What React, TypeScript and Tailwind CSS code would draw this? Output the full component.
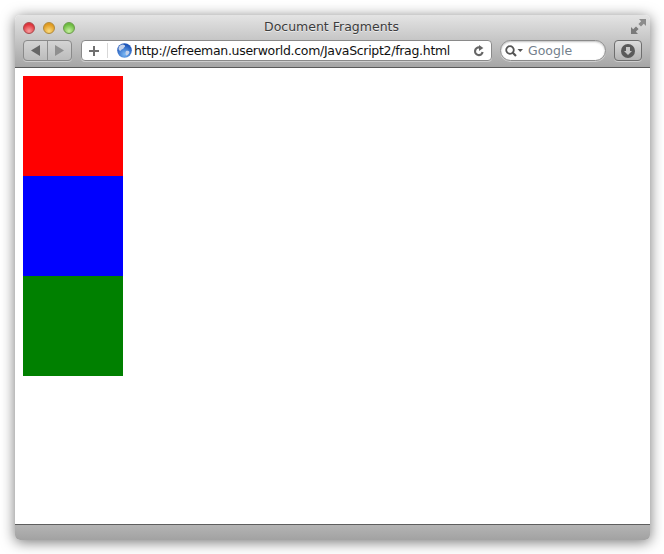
export default function App() {
  return (
    <div className="w-[664px] h-[554px] bg-white pl-[15px] pt-[15px] overflow-hidden">
      <div className="w-[635px] h-[525px] flex flex-col rounded-[5px] shadow-[0_2px_14px_rgba(0,0,0,0.55)] overflow-hidden bg-white">
        <div className="h-[53px] shrink-0 flex flex-col bg-gradient-to-b from-[#e4e4e4] to-[#a6a6a6] border-b border-[#5a5a5a] px-2">
          <div className="h-[25px] shrink-0 flex items-center relative">
            <div className="flex gap-2 pt-[1px]">
              <span className="w-3 h-3 rounded-full border border-[#a8484c] bg-[radial-gradient(circle_at_50%_80%,#f8a0a0,#e0343c_70%)]" />
              <span className="w-3 h-3 rounded-full border border-[#b08a3c] bg-[radial-gradient(circle_at_50%_80%,#fbdc80,#e09a20_70%)]" />
              <span className="w-3 h-3 rounded-full border border-[#6c9a4c] bg-[radial-gradient(circle_at_50%_80%,#c8f0a0,#6cbc40_70%)]" />
            </div>
            <div className="flex-1 text-center text-[12.5px] leading-[22px] text-[#3c3c3c] pr-[54px] pb-[2px] font-['DejaVu_Sans',sans-serif] [text-shadow:0_1px_0_rgba(255,255,255,0.6)]">Document Fragments</div>
            <svg width="15" height="15" viewBox="0 0 15 15" className="absolute right-[-4px] top-[4px]">
              <path d="M8 0h7v7l-2.200-2.200-2.800 2.800-2.600-2.600 2.800-2.800z" fill="#8c8c8c" />
              <path d="M0 15V8l2.200 2.200 2.800-2.800 2.600 2.600-2.800 2.800L7 15z" fill="#7a7a7a" />
            </svg>
          </div>
          <div className="flex items-center h-[21px]">
            <div className="w-[49px] h-[21px] flex rounded-[4px] border border-[#8a8a8a] bg-gradient-to-b from-[#d4d4d4] to-[#bcbcbc] shadow-[0_1px_0_rgba(255,255,255,0.4)]">
              <div className="w-[24px] flex items-center justify-center border-r border-[#8e8e8e] pr-[1px]">
                <svg width="9" height="11" viewBox="0 0 9 11" fill="#666"><path d="M0 5.500L9 0v11z" /></svg>
              </div>
              <div className="flex-1 flex items-center justify-center">
                <svg width="9" height="11" viewBox="0 0 9 11" fill="#8f8f8f"><path d="M9 5.500L0 0v11z" /></svg>
              </div>
            </div>
            <div className="ml-[9px] w-[411px] h-[21px] flex items-center rounded-[4px] border border-[#8a8a8a] bg-white shadow-[0_1px_0_rgba(255,255,255,0.4)]">
              <div className="w-[26px] h-[15px] shrink-0 flex items-center justify-center border-r border-[#d8d8d8] pr-[2px]">
                <svg width="10" height="10" viewBox="0 0 10 10" fill="#707070"><path d="M4 0h2v4h4v2H6v4H4V6H0V4h4z" /></svg>
              </div>
              <svg width="15" height="15" viewBox="0 0 15 15" className="ml-[9px] shrink-0">
                <defs>
                  <radialGradient id="g" cx="50%" cy="75%" r="65%"><stop offset="0" stopColor="#7ab8f4" /><stop offset="1" stopColor="#1c54b8" /></radialGradient>
                </defs>
                <circle cx="7.500" cy="7.500" r="7.300" fill="url(#g)" />
                <path d="M3 2.500c2-1.500 4-1 5 0 .5 1.500-1 1.500-1.500 3-1 1-2.500 1-3 2.500-1.500-.5-2-1.500-2-3 .3-1 .8-2 1.500-2.500zM9 8c1.500-.5 3 0 3.500 1-.5 2-2 3.500-3.500 3.500-.5-1.500-1-3 0-4.500z" fill="#c4d2ea" />
              </svg>
              <div className="ml-[2px] w-[315px] whitespace-nowrap text-[12.5px] tracking-[-0.3px] leading-[19px] text-[#111] font-['DejaVu_Sans',sans-serif]">http://efreeman.userworld.com/JavaScript2/frag.html</div>
              <svg width="12" height="12" viewBox="0 0 11 11" className="ml-auto mr-[6px] shrink-0" fill="none" stroke="#666" strokeWidth="2">
                <path d="M8.800 6.500A3.500 3.500 0 1 1 6 2.300" />
                <path d="M5.500 0l4 2.800-4 2.700z" fill="#666" stroke="none" />
              </svg>
            </div>
            <div className="ml-[8px] w-[106px] h-[21px] flex items-center rounded-full border border-[#8a8a8a] bg-white shadow-[inset_0_1px_2px_rgba(0,0,0,0.25),0_1px_0_rgba(255,255,255,0.4)] pl-[4px]">
              <svg width="18" height="12" viewBox="0 0 18 12" fill="none" stroke="#555" strokeWidth="1.800" className="shrink-0">
                <circle cx="5" cy="5" r="3.800" />
                <path d="M7.800 7.800L11 11" strokeWidth="2.200" />
                <path d="M12.500 4H18l-2.750 3z" fill="#555" stroke="none" />
              </svg>
              <span className="ml-[5px] text-[12.5px] leading-[19px] text-[#74808c] font-['DejaVu_Sans',sans-serif]">Google</span>
            </div>
            <div className="ml-[8px] w-[28px] h-[21px] flex items-center justify-center rounded-[4px] border border-[#6e6e6e] bg-gradient-to-b from-[#dcdcdc] to-[#b4b4b4] shadow-[0_1px_0_rgba(255,255,255,0.4)]">
              <svg width="14" height="14" viewBox="0 0 14 14">
                <circle cx="7" cy="7" r="7" fill="#5a5a5a" />
                <path d="M5 3h4v4h2l-4 4-4-4h2z" fill="#c8c8c8" />
              </svg>
            </div>
          </div>
        </div>
        <div className="flex-1 bg-white pl-2 pt-2">
          <div className="w-[100px] h-[100px] bg-[#ff0000]" />
          <div className="w-[100px] h-[100px] bg-[#0000ff]" />
          <div className="w-[100px] h-[100px] bg-[#008000]" />
        </div>
        <div className="h-[16px] shrink-0 border-t border-[#5e5e5e] bg-gradient-to-b from-[#b4b4b4] to-[#a2a2a2]" />
      </div>
    </div>
  );
}
